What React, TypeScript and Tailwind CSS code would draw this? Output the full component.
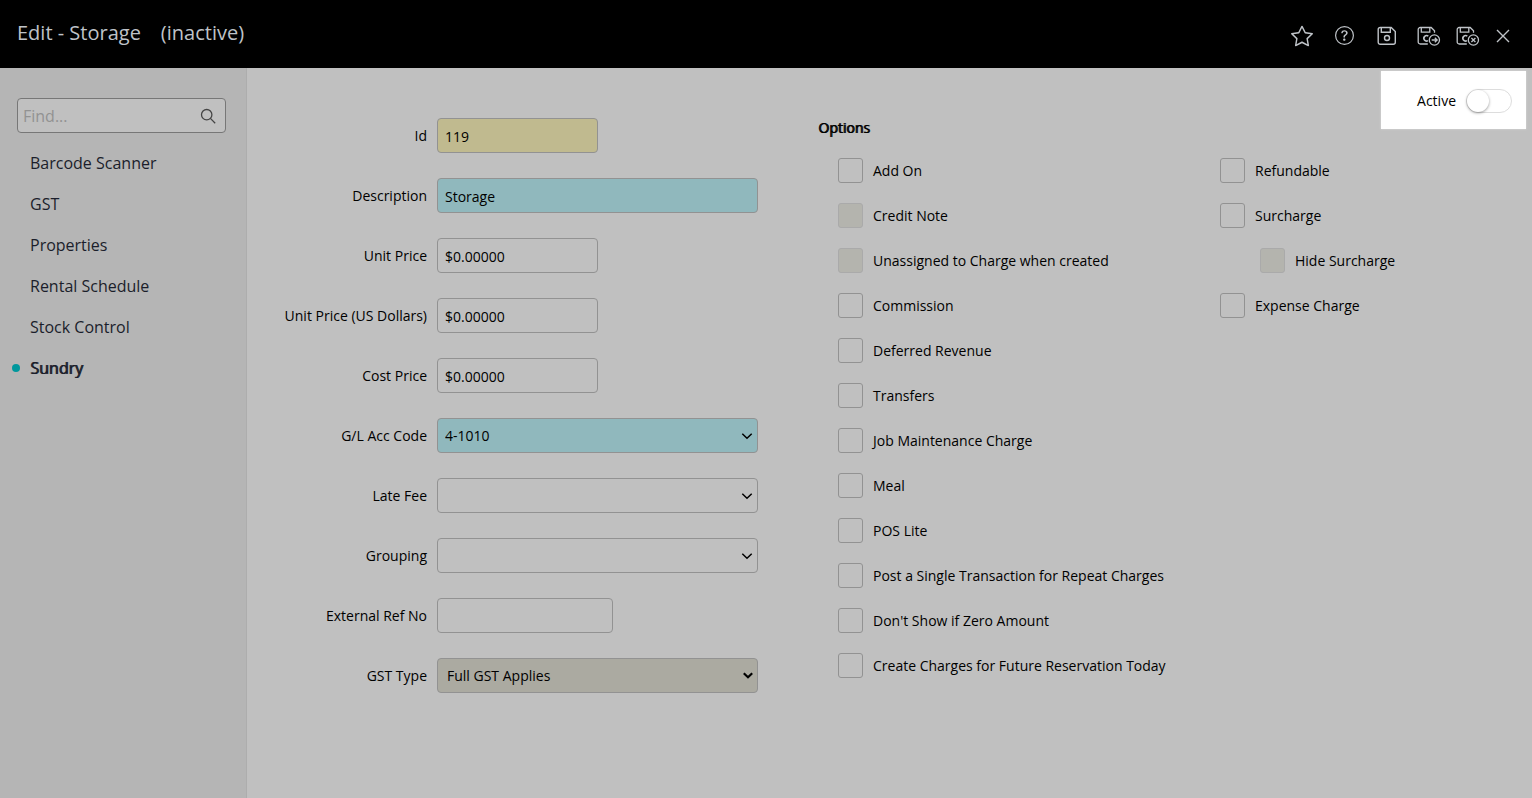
import type { ReactNode } from "react";
import { BsQuestionCircle, BsStar } from "react-icons/bs";

const menu = ["Barcode Scanner", "GST", "Properties", "Rental Schedule", "Stock Control", "Sundry"];

type FieldData = {
  id: string;
  label: string;
  value: string;
  kind: "input" | "combo" | "select";
  className: string;
};

const fields: FieldData[] = [
  { id: "id", label: "Id", value: "119", kind: "input", className: "w-[161px] bg-[#c0ba8f]" },
  { id: "description", label: "Description", value: "Storage", kind: "input", className: "w-[321px] bg-[#90b8bd]" },
  { id: "unit-price", label: "Unit Price", value: "$0.00000", kind: "input", className: "w-[161px]" },
  { id: "unit-price-us", label: "Unit Price (US Dollars)", value: "$0.00000", kind: "input", className: "w-[161px]" },
  { id: "cost-price", label: "Cost Price", value: "$0.00000", kind: "input", className: "w-[161px]" },
  { id: "gl-code", label: "G/L Acc Code", value: "4-1010", kind: "combo", className: "w-[321px] bg-[#90b8bd]" },
  { id: "late-fee", label: "Late Fee", value: "", kind: "combo", className: "w-[321px]" },
  { id: "grouping", label: "Grouping", value: "", kind: "combo", className: "w-[321px]" },
  { id: "ref-no", label: "External Ref No", value: "", kind: "input", className: "w-[176px]" },
  { id: "gst-type", label: "GST Type", value: "Full GST Applies", kind: "select", className: "w-[321px] bg-[#abaaa1]" },
];

type OptionData = { label: string; disabled?: boolean; nested?: boolean };

const leftOptions: OptionData[] = [
  { label: "Add On" },
  { label: "Credit Note", disabled: true },
  { label: "Unassigned to Charge when created", disabled: true },
  { label: "Commission" },
  { label: "Deferred Revenue" },
  { label: "Transfers" },
  { label: "Job Maintenance Charge" },
  { label: "Meal" },
  { label: "POS Lite" },
  { label: "Post a Single Transaction for Repeat Charges" },
  { label: "Don't Show if Zero Amount" },
  { label: "Create Charges for Future Reservation Today" },
];

const rightOptions: OptionData[] = [
  { label: "Refundable" },
  { label: "Surcharge" },
  { label: "Hide Surcharge", disabled: true, nested: true },
  { label: "Expense Charge" },
];

export default function App() {
  return (
    <div className="flex min-h-screen flex-col bg-[#c0c0c0] font-['Open_Sans','Noto_Sans',sans-serif] text-sm text-black">
      <Header />
      <div className="relative flex flex-1">
        <Sidebar />
        <main className="flex flex-1 pt-[50px] pl-5">
          <div className="flex w-[491px] shrink-0 flex-col gap-[25px]">
            {fields.map((field) => (
              <Field key={field.id} field={field} />
            ))}
          </div>
          <section className="ml-[60px] flex-1">
            <h2 className="leading-5 [text-shadow:1px_0_0_currentColor]">Options</h2>
            <div className="mt-5 ml-5 flex">
              <OptionList options={leftOptions} className="w-[382px] shrink-0" />
              <OptionList options={rightOptions} className="flex-1" />
            </div>
          </section>
        </main>
        <ActiveSwitch />
      </div>
    </div>
  );
}

function Header() {
  return (
    <header className="flex h-[68px] items-center justify-between bg-black pr-[21px] pl-[17px] text-[#bfc3c8]">
      <h1 className="flex gap-5 pb-0.5 text-xl">
        <span>Edit - Storage</span>
        <span>(inactive)</span>
      </h1>
      <div className="flex items-center pt-[3px]">
        <IconButton label="Favourite" className="mr-[22px]">
          <BsStar size={22} />
        </IconButton>
        <IconButton label="Help" className="mr-[23px]">
          <BsQuestionCircle size={19} />
        </IconButton>
        <IconButton label="Save" className="mr-5">
          <svg width="20" height="20" viewBox="0 0 20 20" fill="none" stroke="currentColor" strokeWidth="1.4">
            <Floppy />
            <circle cx="10" cy="12" r="2.5" />
          </svg>
        </IconButton>
        <IconButton label="Save and continue" className="mr-[14px]">
          <SaveBadge>
            <path d="M14.7 14h5.4M17.8 11.7l2.4 2.3-2.4 2.3" />
          </SaveBadge>
        </IconButton>
        <IconButton label="Save and close" className="mr-[14px]">
          <SaveBadge>
            <path d="m15.4 12 4 4m0-4-4 4" />
          </SaveBadge>
        </IconButton>
        <IconButton label="Close">
          <svg width="16" height="16" viewBox="0 0 16 16" fill="none" stroke="currentColor" strokeWidth="1.4">
            <path d="m2 2 12 12M14 2 2 14" />
          </svg>
        </IconButton>
      </div>
    </header>
  );
}

function IconButton({ label, className = "", children }: { label: string; className?: string; children: ReactNode }) {
  return (
    <button type="button" aria-label={label} className={`block ${className}`}>
      {children}
    </button>
  );
}

function Floppy() {
  return (
    <>
      <path d="M3.2 1.5h11l4.1 4.1v10.7a2 2 0 0 1-2 2H3.2a2 2 0 0 1-2-2V3.5a2 2 0 0 1 2-2Z" />
      <path d="M4.3 1.8v4.4h9V1.8" />
    </>
  );
}

function SaveBadge({ children }: { children: ReactNode }) {
  return (
    <svg width="25" height="20" viewBox="0 0 25 20" fill="none" stroke="currentColor" strokeWidth="1.3">
      <path d="M10.8 18H3.2a2 2 0 0 1-2-2V3.5a2 2 0 0 1 2-2h11l3.3 3.3v2" />
      <path d="M4.3 1.8v4.4h8.5V1.8" />
      <path d="M11.3 10.2a2.7 2.7 0 1 0-.3 4.4" strokeWidth="1.6" />
      <circle cx="17.4" cy="14" r="5.1" />
      {children}
    </svg>
  );
}

function Sidebar() {
  return (
    <aside className="w-[247px] shrink-0 border-r border-[#adadad] bg-[#b5b5b5] pt-[30px]">
      <label className="mr-5 ml-[17px] flex h-[35px] items-center rounded border border-[#777] bg-[#c0c0c0] pr-[9px] pl-[5px]">
        <input
          type="search"
          aria-label="Find"
          placeholder="Find..."
          className="w-full min-w-0 flex-1 bg-transparent text-base outline-none placeholder:text-[#929292]"
        />
        <svg width="16" height="16" viewBox="0 0 16 16" fill="none" stroke="#444" strokeWidth="1.3">
          <circle cx="6.7" cy="6.7" r="5.2" />
          <path d="m10.4 10.4 4.8 4.8" />
        </svg>
      </label>
      <nav className="mt-[9px] flex flex-col text-base text-[#1b1e2b]">
        {menu.map((item) => {
          const current = item === "Sundry";
          return (
            <a
              key={item}
              href="#"
              className={`flex h-[41px] items-center ${current ? "pl-3 [text-shadow:1px_0_0_currentColor]" : "pl-[30px]"}`}
            >
              {current && <span className="mr-2.5 size-2 rounded-full bg-[#00979c]" />}
              {item}
            </a>
          );
        })}
      </nav>
    </aside>
  );
}

function Field({ field }: { field: FieldData }) {
  const { id, label, value, kind, className } = field;
  const box = `h-[35px] rounded border border-[#929292] outline-none ${className}`;

  return (
    <div className="flex items-center gap-2.5">
      <label htmlFor={id} className="w-40 text-right">
        {label}
      </label>
      {kind === "input" ? (
        <input id={id} defaultValue={value} className={`px-[7px] pt-0.5 ${box}`} />
      ) : (
        <div className="relative">
          <select
            id={id}
            defaultValue={value}
            className={`block appearance-none ${kind === "select" ? "px-[9px]" : "px-[7px]"} ${box}`}
          >
            <option value={value}>{value}</option>
          </select>
          <svg
            className="pointer-events-none absolute top-3 right-[5px] size-3"
            viewBox="0 0 12 12"
            fill="none"
            stroke="black"
            strokeWidth={kind === "select" ? 2.2 : 1.5}
          >
            <path d={kind === "select" ? "M2.8 3.3 7 7.3l4.2-4" : "m1.3 3.7 4.7 4.6 4.7-4.6"} />
          </svg>
        </div>
      )}
    </div>
  );
}

function OptionList({ options, className }: { options: OptionData[]; className: string }) {
  return (
    <div className={`flex flex-col gap-5 ${className}`}>
      {options.map(({ label, disabled, nested }) => (
        <label key={label} className={`flex h-[25px] items-center gap-2.5 ${nested ? "ml-10" : ""}`}>
          <input
            type="checkbox"
            disabled={disabled}
            className="size-[25px] shrink-0 appearance-none rounded-[3px] border border-[#929292] disabled:border-[#aaa] disabled:bg-[#b4b4ae]"
          />
          {label}
        </label>
      ))}
    </div>
  );
}

function ActiveSwitch() {
  return (
    <label className="absolute top-[3px] right-1.5 flex h-[58px] w-[145px] items-center justify-end gap-2.5 bg-white pt-0.5 pr-3.5 shadow-[0_0_2px_#ddd]">
      Active
      <input
        type="checkbox"
        role="switch"
        className="h-6 w-[46px] appearance-none rounded-full border border-[#ddd] bg-white before:block before:size-[22px] before:rounded-full before:bg-white before:shadow-[0_1px_3px_rgba(0,0,0,0.4)] checked:before:ml-[22px]"
      />
    </label>
  );
}
